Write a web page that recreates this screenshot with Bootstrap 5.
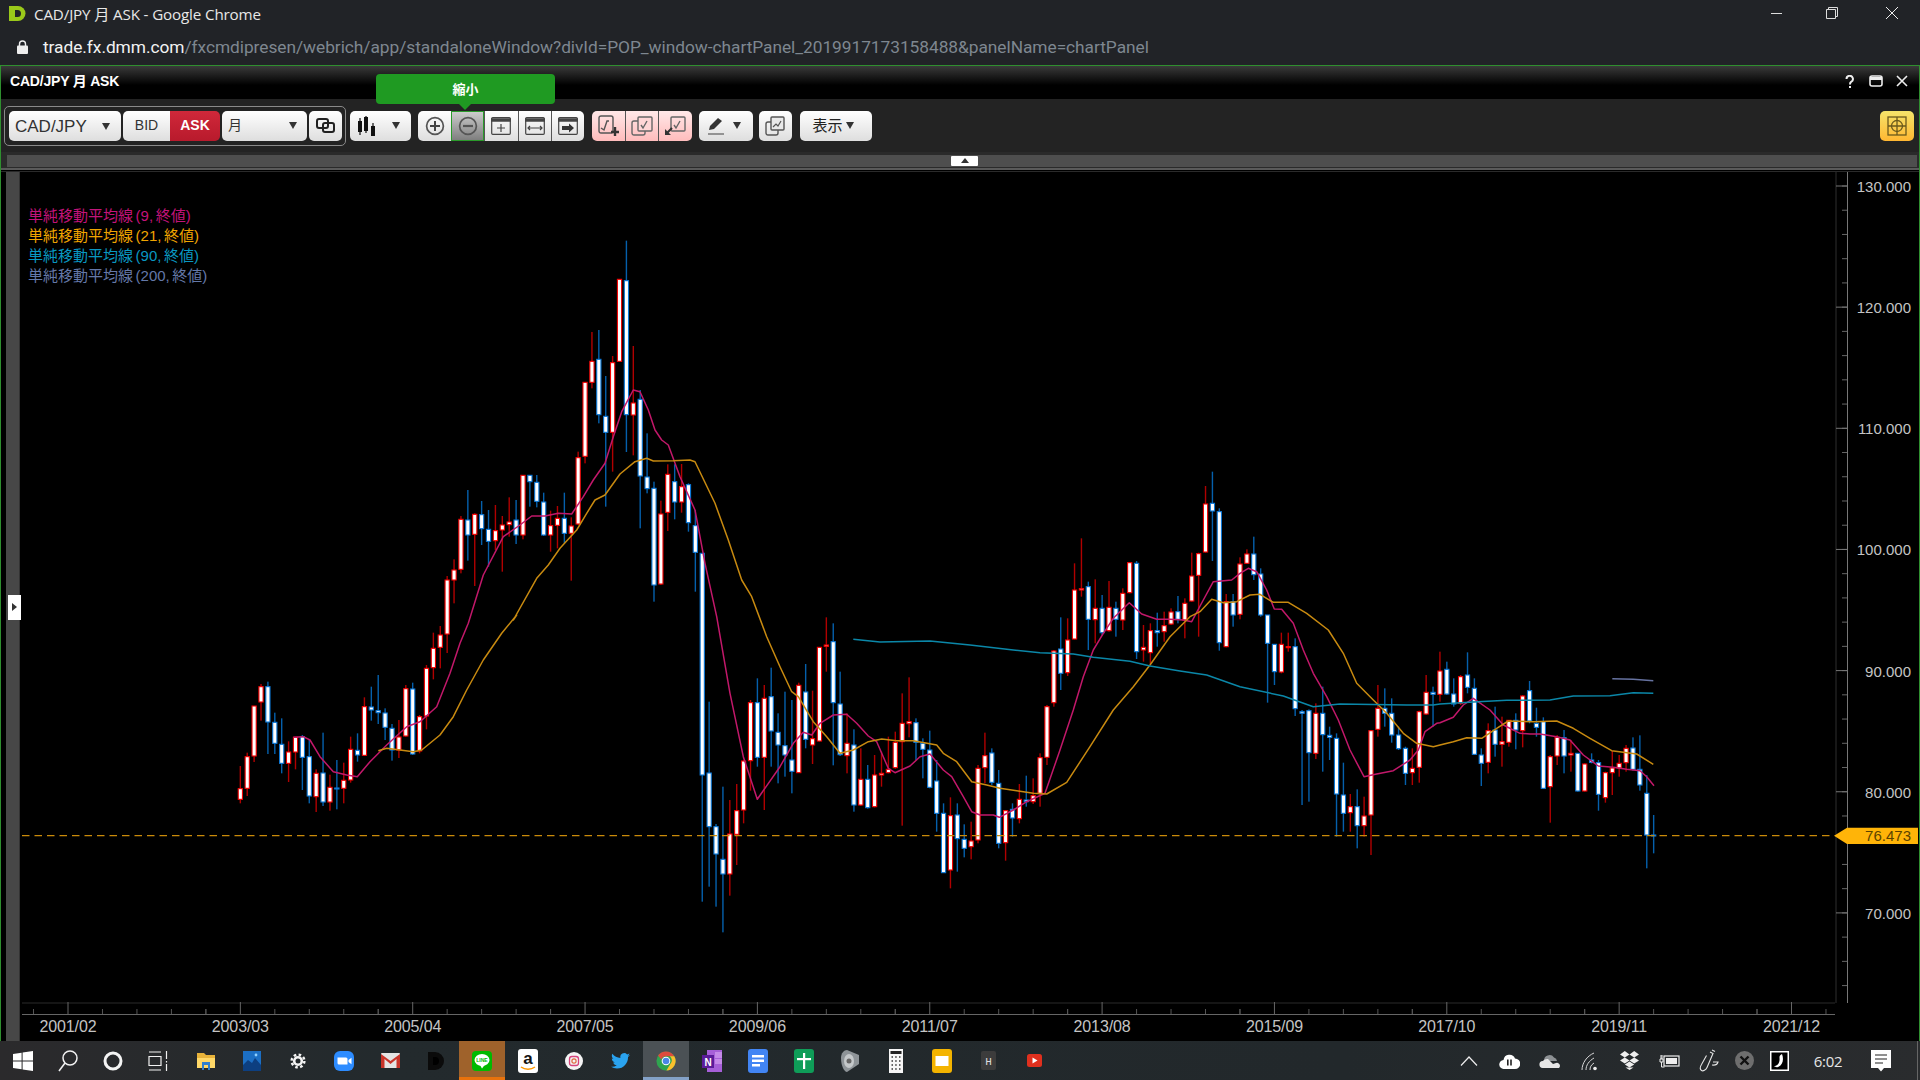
<!DOCTYPE html>
<html lang="ja">
<head>
  <meta charset="UTF-8" />
  <title>CAD/JPY 月 ASK</title>
  <link href="https://cdn.jsdelivr.net/npm/bootstrap@5.3.3/dist/css/bootstrap.min.css" rel="stylesheet" />
  <style>
    html, body { height: 100%; background: #000; overflow: hidden; }
    body { font-family: "Liberation Sans", "Noto Sans CJK JP", sans-serif; }
    svg { display: block; flex: none; }

    .gc-title { height: 30px; background: #212327; color: #e8e8e8; font: 15.2px "Open Sans", "Noto Sans CJK JP", sans-serif; padding-left: 9px; padding-bottom: 4px; }
    .gc-title .ttl { margin-left: 8px; letter-spacing: -.15px; }
    .gc-ctl { width: 56px; }
    .gc-addr { height: 35px; background: #212327; padding-left: 17px; padding-bottom: 2px; font: 17.33px Roboto, sans-serif; color: #7e8790; letter-spacing: -.05px; }
    .gc-addr b { font-weight: 400; color: #f2f2f2; }
    .gc-addr span { margin-left: 15px; }

    .dmm-win { border: solid #2f8f2f; border-width: 1px 1px 0; min-height: 0; }
    .win-head { height: 33px; background: linear-gradient(#3a3a3a, #000 58%); color: #fff; font-size: 14px; font-weight: 700; padding-left: 9px; padding-right: 4px; padding-bottom: 2px; letter-spacing: -.2px; }
    .win-head .hd-ico { width: 26px; }

    .win-tools { height: 53px; background: #232323; padding-top: 11.5px; padding-left: 8px; padding-right: 5px; position: relative; }
    .tool-frame { position: absolute; left: 3px; top: 7px; width: 342px; height: 40px; border: 1px solid #8a8a8a; border-radius: 5px; }
    .tb { height: 30.6px; padding: 0; border: 0; border-radius: 5px; background: linear-gradient(#fff, #dedede); color: #333; position: relative; }
    .tb:hover { background: linear-gradient(#fff, #dedede); color: #333; }
    .btn-group > .tb + .tb { margin-left: 0 !important; border-left: 1px solid #555; }
    .btn-group .tb:not(:first-child) { border-top-left-radius: 0; border-bottom-left-radius: 0; }
    .btn-group .tb:not(:last-child) { border-top-right-radius: 0; border-bottom-right-radius: 0; }
    .w-pair { width: 112px; margin-right: 2px; justify-content: space-between; font-size: 17px; padding: 2px 11px 0 6px; color: #333; }
    .w-bid { width: 47px; font-size: 14px; }
    .w-ask { width: 50px; font-size: 14px; font-weight: 700; }
    .tb.is-ask, .tb.is-ask:hover { background: linear-gradient(#d0283a, #b81a2c); color: #fff; border-left: 0 !important; }
    .w-tf { width: 85px; margin: 0 2px; justify-content: space-between; font-size: 14px; padding: 0 10px 0 6px; }
    .w-ic { width: 33px; }
    .w-chart { width: 61px; margin-left: 8px; margin-right: 7px; justify-content: space-between; padding: 0 11px 0 7px; }
    .w-seg { width: 33.2px; }
    .tb.is-on, .tb.is-on:hover { background: linear-gradient(#cfcfcf, #7c7c7c); box-shadow: inset 0 0 0 1px #2a9a2a; border-left: 0 !important; }
    .tb.is-pink, .tb.is-pink:hover { background: linear-gradient(#ffe8e8, #ffbcbc); }
    .w-pen { width: 54px; margin: 0 6px 0 7px; justify-content: space-between; padding: 0 12px 0 9px; }
    .w-show { width: 72px; margin-left: 8px; font-size: 15px; gap: 3px; color: #222; padding-right: 5px; }
    .tb.is-gold, .tb.is-gold:hover { width: 34px; background: linear-gradient(#f5e46a, #ffb732); }
    .zoom-gap { margin-right: 8px; }
    .caret { width: 0; height: 0; border: solid transparent; border-width: 7px 4.5px 0; border-top-color: #333; }

    .tip-green { position: absolute; left: 375px; top: -25px; width: 179px; height: 30px; padding-bottom: 2px; background: #1f9a22; color: #fff; border-radius: 4px; font: 700 13px "Noto Sans CJK JP", sans-serif; z-index: 5; }
    .tip-green::after { content: ""; position: absolute; left: 83px; top: 100%; border: solid transparent; border-width: 6px 6px 0; border-top-color: #1f9a22; }

    .split-bar { height: 20px; background: #2a2a2a; padding-top: 3px; position: relative; }
    .split-fill { height: 12px; margin: 0 2px 0 6px; background: #4e4e4e; border-bottom: 0; }
    .split-line { height: 3px; margin: 1px 0 0; border-top: 2px solid #5a5a5a; background: #000; }
    .split-grip { position: absolute; left: 950px; top: 4px; width: 27px; height: 10px; background: #fff; border-radius: 1px; }
    .split-grip::after { content: ""; position: absolute; left: 10px; top: 2px; border: solid transparent; border-width: 0 4px 5px; border-bottom-color: #333; }

    .chart-wrap { min-height: 0; background: #000; }
    .chart-rail { width: 20px; padding-left: 5px; position: relative; flex: none; }
    .chart-rail .fill { width: 14px; height: 100%; background: #474747; border-right: 1px solid #333; }
    .rail-grip { position: absolute; left: 7px; top: 423px; width: 13px; height: 25px; background: #fff; }
    .rail-grip::after { content: ""; position: absolute; left: 4px; top: 8px; border: solid transparent; border-width: 4px 0 4px 5px; border-left-color: #333; }
    .ma-legend { position: absolute; left: 7px; top: 34px; font: 15px/20.1px "Liberation Sans", "Noto Sans CJK JP", sans-serif; word-spacing: -1.6px; }
    .ma-a { color: #c2147a; } .ma-b { color: #f0a400; } .ma-c { color: #0997c2; } .ma-d { color: #6478a8; }
    .ax { font: 16px "Liberation Sans", sans-serif; fill: #c4c4c4; letter-spacing: -.1px; }
    .ay { font: 15px "Liberation Sans", sans-serif; fill: #c4c4c4; }
    .ap { font: 15px "Liberation Sans", sans-serif; fill: #5c4300; }

    .task-bar { height: 39px; background: linear-gradient(90deg, #2b2a2c, #232a2d 20%, #22282b 70%, #2a2c2e); color: #e6e6e6; }
    .t-slot { width: 46px; height: 39px; position: relative; }
    .t-slot.first { width: 45px; }
    .t-gap { width: 3px; }
    .t-line { background: #9f622b; box-shadow: inset 0 -3px 0 #e8720c; }
    .t-chr { background: #4b5155; box-shadow: inset 0 -3px 0 #84a2c8; }
    .t-tray { width: 40px; height: 39px; }
    .t-mini { width: 30px; }
    .t-clock { font: 15px "Open Sans", sans-serif; width: 56px; letter-spacing: -.3px; margin-left: 1px; margin-right: 5px; }
    .t-edge { width: 1px; height: 39px; background: #666; margin-left: 16px; margin-right: 2px; }
  </style>
</head>
<body class="d-flex flex-column m-0">

  <div class="gc-title d-flex align-items-center flex-none">
    <svg width="17" height="15" viewBox="0 0 17 15"><path d="M0 0h9a7.500 7.500 0 0 1 0 15H0z" fill="#9ac81a"/><path d="M6 4h2.500a3.500 3.500 0 0 1 0 7H6z" fill="#212327"/></svg>
    <div class="ttl flex-grow-1">CAD/JPY 月 ASK - Google Chrome</div>
    <div class="gc-ctl d-flex justify-content-center"><svg width="11" height="11"><path d="M0 5.5h11" stroke="#ddd"/></svg></div>
    <div class="gc-ctl d-flex justify-content-center"><svg width="12" height="12" fill="none" stroke="#ddd"><path d="M.5 2.5h9v9h-9zM2.5 2.5v-2h9v9h-2"/></svg></div>
    <div class="gc-ctl d-flex justify-content-center ms-1"><svg width="12" height="12" stroke="#eee"><path d="M0 0l12 12M12 0L0 12"/></svg></div>
  </div>
  <div class="gc-addr d-flex align-items-center">
    <svg width="11" height="14" viewBox="0 0 11 14"><path d="M2.5 6V4a3 3 0 0 1 6 0v2" fill="none" stroke="#eee" stroke-width="1.4"/><rect y="5.5" width="11" height="8.5" rx="1" fill="#eee"/></svg>
    <span><b>trade.fx.dmm.com</b>/fxcmdipresen/webrich/app/standaloneWindow?divId=POP_window-chartPanel_2019917173158488&amp;panelName=chartPanel</span>
  </div>

  <div class="dmm-win flex-grow-1 d-flex flex-column">
    <div class="win-head d-flex align-items-center justify-content-between">
      <div>CAD/JPY 月 ASK</div>
      <div class="d-flex">
        <div class="hd-ico d-flex justify-content-center"><svg width="10" height="14" viewBox="0 0 10 14" fill="none" stroke="#eee" stroke-width="2"><path d="M1.5 4a3.2 3.2 0 1 1 4.6 2.9C5 7.6 5 8.3 5 9.5"/><path d="M5 11v2"/></svg></div>
        <div class="hd-ico d-flex justify-content-center"><svg width="14" height="12" viewBox="0 0 14 12" fill="none" stroke="#eee" stroke-width="1.6"><rect x="1" y="1" width="12" height="10" rx="2"/><path d="M1 3.5h12" stroke-width="3"/></svg></div>
        <div class="hd-ico d-flex justify-content-center"><svg width="12" height="12" stroke="#eee" stroke-width="1.6"><path d="M1 1l10 10M11 1L1 11"/></svg></div>
      </div>
    </div>

    <div class="win-tools d-flex">
      <div class="tool-frame"></div>
      <div class="tip-green d-flex align-items-center justify-content-center">縮小</div>

      <button class="btn tb w-pair d-flex align-items-center">CAD/JPY<i class="caret"></i></button>
      <div class="btn-group">
        <button class="btn tb w-bid">BID</button>
        <button class="btn tb w-ask is-ask">ASK</button>
      </div>
      <button class="btn tb w-tf d-flex align-items-center">月<i class="caret"></i></button>
      <button class="btn tb w-ic d-flex align-items-center justify-content-center">
        <svg width="19" height="15" viewBox="0 0 19 15" fill="none" stroke="#222" stroke-width="2"><rect x="1" y="1" width="11" height="9" rx="2"/><rect x="7" y="5" width="11" height="9" rx="2"/></svg>
      </button>

      <button class="btn tb w-chart d-flex align-items-center">
        <svg width="19" height="20" viewBox="0 0 19 20" fill="#111"><rect x="1" y="5" width="4" height="11"/><rect x="2.4" y="2" width="1.2" height="17"/><rect x="7" y="1" width="4" height="14"/><rect x="8.4" y="0" width="1.2" height="17"/><rect x="14" y="10" width="4" height="10"/><rect x="15.4" y="7" width="1.2" height="13"/></svg>
        <i class="caret"></i>
      </button>

      <div class="btn-group zoom-gap">
        <button class="btn tb w-seg d-flex align-items-center justify-content-center">
          <svg width="20" height="20" viewBox="0 0 20 20" fill="none" stroke="#555" stroke-width="1.7"><circle cx="10" cy="10" r="8.4"/><path d="M10 5v10M5 10h10" stroke="#444" stroke-width="2"/></svg>
        </button>
        <button class="btn tb w-seg is-on d-flex align-items-center justify-content-center">
          <svg width="20" height="20" viewBox="0 0 20 20" fill="none" stroke="#555" stroke-width="1.7"><circle cx="10" cy="10" r="8.4"/><path d="M5 10h10" stroke-width="2.2"/></svg>
        </button>
        <button class="btn tb w-seg d-flex align-items-center justify-content-center">
          <svg width="20" height="18" viewBox="0 0 20 18" fill="none" stroke="#444" stroke-width="1.2"><rect x=".7" y=".7" width="18.6" height="16.6" rx="1"/><path d="M0 3h20" stroke-width="3.5"/><path d="M10 7v8M6 11h8"/></svg>
        </button>
        <button class="btn tb w-seg d-flex align-items-center justify-content-center">
          <svg width="20" height="18" viewBox="0 0 20 18" fill="none" stroke="#444" stroke-width="1.2"><rect x=".7" y=".7" width="18.6" height="16.6" rx="1"/><path d="M0 3h20" stroke-width="3.5"/><path d="M3 11h14M5 9l-2 2 2 2M15 9l2 2-2 2"/></svg>
        </button>
        <button class="btn tb w-seg d-flex align-items-center justify-content-center">
          <svg width="20" height="18" viewBox="0 0 20 18" fill="none" stroke="#444" stroke-width="1.2"><rect x=".7" y=".7" width="18.6" height="16.6" rx="1"/><path d="M0 3h20" stroke-width="3.5"/><path d="M4 9h7V6.5l5 4.5-5 4.5V13H4z" fill="#333" stroke="none"/></svg>
        </button>
      </div>

      <div class="btn-group">
        <button class="btn tb is-pink w-seg d-flex align-items-center justify-content-center">
          <svg width="22" height="22" viewBox="0 0 22 22" fill="none" stroke="#555" stroke-width="1.4"><rect x="1" y="1" width="14" height="17" rx="2"/><path d="M3 13l3 2 3-9 2 0"/><path d="M17 12v9M13 17h8" stroke="#333" stroke-width="2.4"/></svg>
        </button>
        <button class="btn tb is-pink w-seg d-flex align-items-center justify-content-center">
          <svg width="22" height="20" viewBox="0 0 22 20" fill="none" stroke="#666" stroke-width="1.4"><rect x="1" y="5" width="13" height="14" rx="2"/><rect x="7" y="1" width="14" height="14" rx="1" fill="#ffd6d6"/><path d="M10 9l2 3 4-7"/></svg>
        </button>
        <button class="btn tb is-pink w-seg d-flex align-items-center justify-content-center">
          <svg width="22" height="20" viewBox="0 0 22 20" fill="none" stroke="#666" stroke-width="1.4"><rect x="7" y="1" width="14" height="14" rx="1"/><path d="M10 9l2 3 4-7"/><path d="M1 13v6h6z" fill="#333" stroke="none"/><path d="M3 17l5-5" stroke="#333" stroke-width="2.2"/></svg>
        </button>
      </div>

      <button class="btn tb w-pen d-flex align-items-center">
        <svg width="17" height="19" viewBox="0 0 17 19"><path d="M1 14l1-4 8-8 4 3-8 8z" fill="#333"/><path d="M0 18h16" stroke="#666" stroke-width="1.3"/></svg>
        <i class="caret"></i>
      </button>
      <button class="btn tb w-ic d-flex align-items-center justify-content-center">
        <svg width="20" height="20" viewBox="0 0 20 20" fill="none" stroke="#555" stroke-width="1.4"><rect x="1" y="6" width="12" height="13" rx="2"/><rect x="6" y="1" width="13" height="13" rx="1" fill="#e9e9e9"/><path d="M8 11l3-3 2 2 3-5" stroke-width="1.2"/></svg>
      </button>
      <button class="btn tb w-show d-flex align-items-center justify-content-center">表示<i class="caret"></i></button>

      <div class="flex-grow-1"></div>
      <button class="btn tb is-gold d-flex align-items-center justify-content-center">
        <svg width="20" height="20" viewBox="0 0 20 20" fill="none" stroke="#6b5a1c" stroke-width="1.3"><rect x="1" y="1" width="18" height="18"/><circle cx="10" cy="10" r="5.5"/><path d="M10 1v18M1 10h18"/></svg>
      </button>
    </div>

    <div class="split-bar">
      <div class="split-fill"></div>
      <div class="split-line"></div>
      <div class="split-grip"></div>
    </div>

    <div class="chart-wrap flex-grow-1 d-flex position-relative">
      <div class="chart-rail">
        <div class="fill"></div>
        <div class="rail-grip"></div>
      </div>
      <div class="position-relative flex-grow-1">
        <svg id="chart" width="1897" height="869" viewBox="21 172 1897 869"></svg>
        <div class="ma-legend">
          <div class="ma-a">単純移動平均線 (9, 終値)</div>
          <div class="ma-b">単純移動平均線 (21, 終値)</div>
          <div class="ma-c">単純移動平均線 (90, 終値)</div>
          <div class="ma-d">単純移動平均線 (200, 終値)</div>
        </div>
      </div>
    </div>
  </div>

  <div class="task-bar d-flex align-items-center flex-none">
    <div class="t-slot first d-flex align-items-center justify-content-center">
      <svg width="20" height="20" viewBox="0 0 20 20" fill="#fff"><path d="M0 3l8.6-1.3v7.8H0zM9.6 1.5L20 0v9.5H9.6zM0 10.5h8.6v7.8L0 17zM9.6 10.5H20V20L9.6 18.5z"/></svg>
    </div>
    <div class="t-slot first d-flex align-items-center justify-content-center">
      <svg width="20" height="24" viewBox="0 0 20 24" fill="none" stroke="#f2f2f2" stroke-width="1.5"><circle cx="12" cy="9" r="7"/><path d="M7 14l-6 8"/></svg>
    </div>
    <div class="t-slot first d-flex align-items-center justify-content-center">
      <svg width="20" height="20" viewBox="0 0 20 20" fill="none" stroke="#f4f4f4" stroke-width="3"><circle cx="10" cy="10" r="8"/></svg>
    </div>
    <div class="t-slot first d-flex align-items-center justify-content-center">
      <svg width="20" height="20" viewBox="0 0 20 20" fill="none" stroke="#f2f2f2" stroke-width="1.2"><path d="M1 1h12M1 19h12M1 5.5h12v9H1zM18.5 0v8M18.5 10v1.5M18.5 13v7"/></svg>
    </div>
    <div class="t-gap"></div>

    <div class="t-slot d-flex align-items-center justify-content-center">
      <svg width="18" height="18" viewBox="0 0 18 18"><path d="M0 1h7l2 2h9v13H0z" fill="#e8b33a"/><path d="M0 6h18v10H0z" fill="#ffd868"/><path d="M5 10h8v8h-2v-5H7v5H5z" fill="#2f7fd0"/></svg>
    </div>
    <div class="t-slot d-flex align-items-center justify-content-center">
      <svg width="18" height="20" viewBox="0 0 18 20"><rect width="18" height="20" fill="#1c6fc4"/><path d="M0 20v-6l5-5 4 3 3-5 6 7v6z" fill="#0d3f80"/><circle cx="13" cy="4" r="1.4" fill="#8fd0ff"/></svg>
    </div>
    <div class="t-slot d-flex align-items-center justify-content-center">
      <svg width="16" height="16" viewBox="0 0 16 16" fill="none" stroke="#f4f4f4"><circle cx="8" cy="8" r="3.8" stroke-width="2.6"/><circle cx="8" cy="8" r="6.4" stroke-width="2.4" stroke-dasharray="2.6 2.4"/></svg>
    </div>
    <div class="t-slot d-flex align-items-center justify-content-center">
      <svg width="20" height="20" viewBox="0 0 20 20"><rect width="20" height="20" rx="6" fill="#2d8cff"/><path d="M3.5 6.5h8.5a1.5 1.5 0 0 1 1.5 1.5v5.500H5A1.500 1.500 0 0 1 3.500 12z" fill="#fff"/><path d="M14.500 9l3-2.300v6.600l-3-2.300z" fill="#fff"/></svg>
    </div>
    <div class="t-slot d-flex align-items-center justify-content-center">
      <svg width="19" height="15" viewBox="0 0 19 15"><rect width="19" height="15" rx="1" fill="#e4e4e4"/><path d="M0 15V1l9.500 7L19 1v14h-3.500V6L9.500 11 3.500 6v9z" fill="#c9342a"/></svg>
    </div>
    <div class="t-slot d-flex align-items-center justify-content-center">
      <svg width="17" height="18" viewBox="0 0 17 18"><path d="M0 0h7a9 9 0 0 1 0 18H0z" fill="#0b0b0b"/><path d="M5 5h2a4 4 0 0 1 0 8H5z" fill="#000"/></svg>
    </div>
    <div class="t-slot t-line d-flex align-items-center justify-content-center">
      <svg width="20" height="20" viewBox="0 0 20 20"><rect width="20" height="20" rx="4" fill="#00b900"/><ellipse cx="10" cy="9" rx="7.500" ry="6" fill="#fff"/><path d="M8 14l2 3.500 3-4z" fill="#fff"/><text x="10" y="11" text-anchor="middle" font-size="5" font-weight="700" fill="#00b900" font-family="Liberation Sans">LINE</text></svg>
    </div>
    <div class="t-slot d-flex align-items-center justify-content-center">
      <svg width="20" height="24" viewBox="0 0 20 24"><rect width="20" height="24" rx="3" fill="#fff"/><text x="10" y="15" text-anchor="middle" font-size="17" font-weight="700" fill="#111" font-family="Liberation Sans">a</text><path d="M3 18c4 3 10 3 14 0" fill="none" stroke="#f90" stroke-width="1.500"/></svg>
    </div>
    <div class="t-slot d-flex align-items-center justify-content-center">
      <svg width="18" height="18" viewBox="0 0 18 18"><circle cx="9" cy="9" r="9" fill="#f4f4f4"/><rect x="4.500" y="4.500" width="9" height="9" rx="2.500" fill="none" stroke="#d6437c" stroke-width="1.300"/><circle cx="9" cy="9" r="2.100" fill="none" stroke="#e06a40" stroke-width="1.200"/></svg>
    </div>
    <div class="t-slot d-flex align-items-center justify-content-center">
      <svg width="19" height="16" viewBox="0 0 24 20"><path d="M24 2.400c-.9.400-1.800.7-2.800.8 1-.6 1.800-1.600 2.200-2.700-1 .6-2 1-3.100 1.200A4.900 4.900 0 0 0 11.900 6.200C7.800 6 4.200 4 1.700.9c-1.300 2.200-.6 5.100 1.500 6.600-.8 0-1.600-.2-2.200-.6 0 2.300 1.600 4.400 3.900 4.900-.7.200-1.500.2-2.200.1.600 2 2.400 3.400 4.600 3.400A9.900 9.900 0 0 1 0 17.300 14 14 0 0 0 7.500 19.500c9.100 0 14.300-7.700 14-14.600 1-.7 1.800-1.500 2.500-2.500z" fill="#2aa3ef"/></svg>
    </div>
    <div class="t-slot t-chr d-flex align-items-center justify-content-center">
      <svg width="20" height="24" viewBox="0 0 24 24"><circle cx="12" cy="12" r="11.500" fill="#2fa44f"/><path d="M12 .5a11.500 11.500 0 0 1 10 5.700H12a6 6 0 0 0-5.700 4L2.500 5.500A11.500 11.500 0 0 1 12 .5z" fill="#dd4b3e"/><path d="M22 6.200a11.500 11.500 0 0 1-9.500 17.300l5-8.500A6 6 0 0 0 16.500 6.200z" fill="#fbc02d"/><circle cx="12" cy="12" r="5.200" fill="#fff"/><circle cx="12" cy="12" r="4" fill="#4a86e8"/></svg>
    </div>
    <div class="t-slot d-flex align-items-center justify-content-center">
      <svg width="20" height="22" viewBox="0 0 20 22"><rect x="5" y="0" width="15" height="22" fill="#a65fd8"/><path d="M13 2h7v6h-7zM13 9h7v5h-7z" fill="#c489e8"/><rect x="0" y="5" width="12" height="13" fill="#5b1c9a"/><text x="6" y="15.500" text-anchor="middle" font-size="10" font-weight="700" fill="#fff" font-family="Liberation Sans">N</text></svg>
    </div>
    <div class="t-slot d-flex align-items-center justify-content-center">
      <svg width="20" height="24" viewBox="0 0 20 24"><rect width="20" height="24" rx="3" fill="#4285f4"/><path d="M4 6h12v2.500H4zM4 10.500h12V13H4zM4 15h8v2.500H4z" fill="#fff"/></svg>
    </div>
    <div class="t-slot d-flex align-items-center justify-content-center">
      <svg width="20" height="24" viewBox="0 0 20 24"><rect width="20" height="24" rx="3" fill="#0f9d58"/><path d="M3 9h14v2.200H3z" fill="#fff"/><path d="M9 4h2.200v16H9z" fill="#fff"/></svg>
    </div>
    <div class="t-slot d-flex align-items-center justify-content-center">
      <svg width="18" height="22" viewBox="0 0 18 22"><path d="M0 8c0-5 3-8 6-8l12 5v9L6 22c-3 0-6-7-6-14z" fill="#8e9498"/><ellipse cx="8" cy="11" rx="5" ry="7" fill="#c4c8ca"/><circle cx="8" cy="11" r="2.500" fill="#666"/></svg>
    </div>
    <div class="t-slot d-flex align-items-center justify-content-center">
      <svg width="14" height="24" viewBox="0 0 14 24"><rect width="14" height="24" fill="#f6f6f6"/><rect x="1.500" y="2" width="11" height="3" fill="#222"/><path d="M2.500 8h1.500M6.200 8h1.500M10 8h1.500M2.500 12h1.500M6.200 12h1.500M10 12h1.500M2.500 16h1.500M6.200 16h1.500M10 16h1.500M2.500 20h1.500M6.200 20h1.500M10 20h1.500" stroke="#333" stroke-width="1.300"/></svg>
    </div>
    <div class="t-slot d-flex align-items-center justify-content-center">
      <svg width="20" height="24" viewBox="0 0 20 24"><rect width="20" height="24" rx="3" fill="#f4b400"/><rect x="3.500" y="7" width="13" height="10" fill="#fff"/></svg>
    </div>
    <div class="t-slot d-flex align-items-center justify-content-center">
      <svg width="15" height="19" viewBox="0 0 15 19"><rect width="15" height="19" rx="2" fill="#3c3c3c"/><text x="7.500" y="14" text-anchor="middle" font-size="11" fill="#ddd" font-family="Liberation Mono">H</text></svg>
    </div>
    <div class="t-slot d-flex align-items-center justify-content-center">
      <svg width="15" height="13" viewBox="0 0 15 13"><rect width="15" height="13" rx="2.500" fill="#e0301e"/><path d="M5.500 3.500l5 3-5 3z" fill="#fff"/></svg>
    </div>

    <div class="flex-grow-1"></div>

    <div class="t-tray d-flex align-items-center justify-content-center">
      <svg width="18" height="10" viewBox="0 0 18 10" fill="none" stroke="#eee" stroke-width="1.200"><path d="M1 9.500L9 1l8 8.500"/></svg>
    </div>
    <div class="t-tray d-flex align-items-center justify-content-center">
      <svg width="21" height="16" viewBox="0 0 21 16"><path d="M5 16a4.500 4.500 0 0 1-.5-9A6 6 0 0 1 16 5.500 5.200 5.200 0 0 1 16 16z" fill="#fff"/><path d="M8.800 6.500v6M12 6.500v6" stroke="#222" stroke-width="1.600"/></svg>
    </div>
    <div class="t-tray d-flex align-items-center justify-content-center">
      <svg width="21" height="15" viewBox="0 0 21 15"><path d="M5 8a5.500 5.500 0 0 1 10-3.500A4 4 0 0 1 18 8z" fill="#8d9194"/><path d="M4 15a3.500 3.500 0 0 1-.2-7 6 6 0 0 1 5.200-2l5 5 3-1a3 3 0 0 1 3 5z" fill="#e6e6e6"/></svg>
    </div>
    <div class="t-tray d-flex align-items-center justify-content-center">
      <svg width="16" height="20" viewBox="0 0 16 20" fill="none" stroke="#d8d8d8" stroke-width="1"><path d="M1 19c0-7 5-14 12-17M5 19c0-5 3-9 8-12M9 19c0-3 1-5 4-7"/><circle cx="14" cy="17.500" r="1.800" fill="#eee" stroke="none"/></svg>
    </div>
    <div class="t-tray d-flex align-items-center justify-content-center">
      <svg width="19" height="19" viewBox="0 0 19 19" fill="#eee"><path d="M4.800 0L0 3.500l4.800 3 4.700-3zM14.200 0L9.500 3.500l4.700 3 4.800-3zM0 9.500l4.800 3 4.700-3-4.700-3zM14.200 6.500l-4.700 3 4.700 3 4.800-3zM4.800 13.500l4.700 3 4.700-3-4.700-3z"/><path d="M9.500 19l-4-2.500h8z"/></svg>
    </div>
    <div class="t-tray d-flex align-items-center justify-content-center">
      <svg width="21" height="16" viewBox="0 0 21 16" fill="none" stroke="#eee"><rect x="5" y="3" width="15" height="10" stroke-width="1.200"/><rect x="7" y="5" width="11" height="6" fill="#eee" stroke="none"/><path d="M1 6h3v3H1zM2 2v4M3 2v4M2.500 9v5h3" stroke-width="1"/></svg>
    </div>
    <div class="t-tray d-flex align-items-center justify-content-center">
      <svg width="20" height="24" viewBox="0 0 20 24" fill="none" stroke="#e4e4e4" stroke-width="1.100"><path d="M11 3l3 1.500-6 14c-1 2.500-4 4-5.500 3S1 18 2.500 15.500l5-9M14 13h5c-.5 2-2.500 3.500-6 3"/><path d="M13 1l3 1.500"/></svg>
    </div>
    <div class="t-tray t-mini d-flex align-items-center justify-content-center">
      <svg width="19" height="19" viewBox="0 0 19 19"><circle cx="9.500" cy="9.500" r="9.500" fill="#6e6e6e"/><path d="M5.500 5.500l8 8M13.500 5.500l-8 8" stroke="#111" stroke-width="2.400"/></svg>
    </div>
    <div class="t-tray d-flex align-items-center justify-content-center">
      <svg width="19" height="20" viewBox="0 0 19 20"><rect width="19" height="20" fill="#fff"/><rect x="1.500" y="1.500" width="16" height="17" fill="#000"/><path d="M12 3c2 5 1 11-4 13-1.500.5-3 0-4-1 3.500 0 6-3 5.500-8C9.300 5 10 4 12 3z" fill="#fff"/></svg>
    </div>
    <div class="t-clock text-center">6:02</div>
    <div class="t-tray d-flex align-items-center justify-content-center">
      <svg width="20" height="22" viewBox="0 0 20 22"><path d="M0 0h20v18h-7l-3 3.500L7 18H0z" fill="#fff"/><path d="M4 5h12M4 9h12M4 13h8" stroke="#222" stroke-width="1.100"/></svg>
    </div>
    <div class="t-edge"></div>
  </div>

  <script>
    // candles read off the chart: type + bodyTop,bodyBottom,wickTop,wickBottom, in crop coordinates (y = y0 + v/3)
    const candleRows = [
      [600, 'r566,598,498,610 r470,565,458,588 r318,468,318,486 r260,306,252,362 b260,366,245,462 b367,430,338,462 b433,490,355,520 r456,490,424,546 r412,456,412,508 b410,472,405,570 b470,588,420,610 r520,590,508,636 b519,606,398,618 r562,606,524,632 b564,566,480,628 r541,565,488,610 r448,540,410,548 b451,465,400,485 r320,466,292,468 b321,330,260,362 b332,338,225,372 b339,382,325,420 b385,450,372,482 r411,450,360,474 r266,408,255,410 b267,462,248,465 r350,453,345,460 r205,348,195,388 r145,203,98,238 r105,142,78,205'],
      [220, 'r1080,1242,1068,1299 r1050,1080,1018,1150 r898,1048,888,1060 b900,945,810,1022 r883,943,880,1098 b884,926,843,975 b928,964,870,1040 r932,962,855,990 r915,930,888,1055 r906,914,832,950 b900,945,840,972 r766,945,766,958 b766,785,766,860 b787,844,765,862 b846,945,818,948 r917,945,872,995 r895,916,858,985 b895,940,818,970 r918,940,892,1082 r713,912,695,915 r487,709,487,730 r424,487,336,505 b418,584,330,610 b589,637,468,860 r428,637,408,755 r178,424,178,424 b182,584,62,696 r549,585,378,706 b538,768,510,925 b771,806,640,820 b805,1095,785,1145 r882,1092,842,1095 r763,877,733,933 b785,846,733,898 r800,846,732,878 b794,908,790,935 b917,997,870,1115 b1000,1665,1000,2045'],
      [600, 'b519,680,305,860 b680,762,672,920 b778,822,560,997 r702,822,600,887 r632,703,552,795'],
      [580, 'r543,690,540,730 r368,542,360,632 b368,532,295,560 r355,532,315,690 b350,453,263,560 b457,495,400,610 b497,525,335,590 b540,574,360,640 r316,578,308,578 b336,478,252,505 r476,495,332,552 r202,483,202,485 r195,199,112,275 b185,368,130,556 b372,524,275,528 r490,527,400,580 b495,675,448,695 r598,675,505,678 b598,683,555,686 r585,680,525,682 r580,585,515,620 r568,578,470,580 r487,563,455,566 r430,485,340,737 r425,431,292,472 b428,487,415,540 b490,508,475,595 b510,622,452,625 b603,700,540,755 b700,878,670,878 r707,870,652,925 b705,776,670,875 b778,805,733,832 r783,800,725,838 r565,780,555,790 r527,563,458,610 b519,607,505,615 b610,790,570,805 r692,788,690,842 b688,714,670,770 r658,716,612,730 b660,665,587,680 r647,665,595,672'],
      [460, 'r893,1000,880,1040 r740,892,735,915 r573,728,570,740 b567,640,472,690 r540,638,475,648 r390,537,310,538 r386,390,235,410 b380,478,365,570 r445,479,358,550 b445,518,405,525 r442,512,363,515 b445,478,425,530 r400,480,385,510 r308,398,308,400 b310,575,303,597 r562,570,495,605 r512,578,490,612 b512,518,458,560 r497,515,455,545 r456,492,445,495 b455,478,408,490 r430,480,415,535 r348,423,278,425 r281,346,278,530 r132,276,78,278 b130,153,35,303 b155,548,145,572 r425,560,402,562 b425,465,402,500 r312,463,292,478 r282,310,268,312 b282,344,230,360 b342,465,325,470 b465,550,465,728 b553,635,553,675 r553,636,518,640 r560,562,518,575 b560,746,535,768 b755,760,750,1035 b752,878,748,1025 r760,880,730,897 b760,824,680,935 b826,832,800,900 b835,1002,820,1130 b1005,1060,908,1115 r1040,1058,1002,1115 b1040,1097,988,1165 r1068,1097,1010,1130 r812,1065,810,1185 r745,808,675,830 b745,760,685,800 b760,825,715,848 b825,866,800,870 b865,940,860,975 r925,938,865,975 r755,922,752,968 r697,762,645,765 b697,703,680,800 r633,703,575,725 b628,702,605,705'],
      [640, 'b162,192,115,200 r110,190,105,195 b105,142,37,160 b145,343,115,345 b345,370,325,438 r272,367,250,400 b270,313,200,350 r305,313,230,380 r241,307,240,320 b241,270,220,328 r168,272,165,322 b152,243,123,250 b250,262,203,290 b245,445,232,447 r350,440,345,548 r292,348,285,375 b293,348,270,400 r340,345,300,395 b340,453,340,455 r372,453,370,455 b360,367,340,370 b368,463,360,512 r398,473,395,488 r384,398,333,465 r370,384,345,410 r325,368,315,395 b324,388,292,392 b388,435,286,452 b460,585,405,685 b585,587,525,640']
    ];

    // moving averages, same crop coordinates: [x0, y0, 'x,y ...']
    const maLines = {
      '#c2186a': [
        [220, 600, '220,412 250,410 270,420 300,470 340,515 380,525 412,530 450,485 500,435 560,380 600,365 650,320 690,220 720,130 745,70'],
        [220, 220, '790,1065 850,950 900,915 935,888 975,888 1015,880 1055,882 1090,830 1120,780 1155,730 1180,650 1205,575 1240,510 1260,515 1285,570 1305,630 1325,660 1345,675 1380,770 1425,870 1455,1030'],
        [680, 580, '110,110 150,340 190,530 232,658 300,560 340,490 370,457 395,465 420,430 460,405 500,403 530,430 565,468 590,485 625,565 645,578 690,558 720,530 750,522 790,570 815,590 850,650 875,695 900,705 940,705 958,712 1000,690 1040,665 1095,640'],
        [1040, 460, '60,870 100,750 130,650 160,570 190,520 220,475 268,428 305,462 350,478 390,478 430,480 455,485 490,420 520,365 575,360 600,340 625,325 650,335 680,390 703,447 725,448 760,490 790,570 820,640 860,710 895,780 930,870 972,950 1010,942 1060,932 1110,900 1135,870 1155,815 1190,790'],
        [1440, 640, '0,248 40,232 70,195 100,175 150,210 190,255 240,280 270,282 300,282 350,290 390,300 430,345 475,378 520,382 560,388 600,392 620,410 642,437']
      ],
      '#c88a10': [
        [220, 600, '475,452 500,445 540,450 580,455 605,450 660,405 700,350 740,270 790,180 845,100 890,45'],
        [220, 220, '880,1200 950,1075 985,1035 1020,985 1070,930 1100,880 1125,840 1155,825 1200,762 1245,725 1280,715 1300,723 1360,722 1410,720 1425,725 1485,850 1525,960'],
        [680, 580, '185,0 215,50 260,170 300,260 335,335 355,350 400,425 440,470 480,520 520,510 565,485 605,477 650,482 700,482 770,495 790,520 830,545 875,605 920,615 960,625 1010,632 1060,640 1100,642 1160,607 1230,500 1300,390 1360,320 1410,255 1470,170 1530,110'],
        [1040, 460, '480,455 515,418 550,428 590,425 630,405 660,403 700,427 745,427 800,460 865,510 910,580 950,670 1000,720 1040,760 1090,820 1130,850 1180,860'],
        [1440, 640, '0,315 40,305 80,293 125,295 170,265 205,243 280,245 350,243 400,265 450,295 515,332 590,342 640,373']
      ],
      '#0b87a8': [
        [680, 580, '520,178 600,186 750,183 870,195 1000,210'],
        [1040, 460, '0,578 100,582 160,592 270,604 330,618 420,633 500,645 600,680 730,708 820,740 900,732 1100,735 1180,735'],
        [1440, 640, '0,192 100,186 200,181 330,180 400,168 510,167 580,158 640,160']
      ],
      '#6672a0': [
        [1440, 640, '517,116 580,118 640,122']
      ]
    };

    const chart = document.getElementById('chart');
    let out = '';

    // axes
    for (let y = 186; y < 1005; y += 24.23) {
      out += `<path d="M1842 ${y}H1847" stroke="#666"/>`;
    }
    out += '<path d="M1836 172V1003" stroke="#2e2e2e"/><path d="M1847.500 172V1003" stroke="#777"/>';
    [130, 120, 110, 100, 90, 80, 70].forEach((v, n) => {
      const y = 186 + n * 121.15;
      out += `<path d="M1836 ${y}H1847" stroke="#777"/>`;
      out += `<text class="ay" x="1911" y="${y + 6}" text-anchor="end">${v}.000</text>`;
    });
    out += '<path d="M22 1003H1835" stroke="#2a2a2a"/><path d="M22 1014.500H1835" stroke="#666"/>';
    ['2001/02', '2003/03', '2005/04', '2007/05', '2009/06', '2011/07', '2013/08', '2015/09', '2017/10', '2019/11', '2021/12'].forEach((t, n) => {
      const x = 68 + n * 172.35;
      out += `<path d="M${x} 1002V1014" stroke="#666"/>`;
      for (let m = -1; m < 4; m++) {
        const mx = x + (m < 0 ? -34.5 : (m + 1) * 34.47);
        if (mx < 1835) out += `<path d="M${mx} 1009V1014" stroke="#555"/>`;
      }
      out += `<text class="ax" x="${x}" y="1032" text-anchor="middle">${t}</text>`;
    });

    // candles
    let i = 0;
    candleRows.forEach(([y0, row]) => {
      row.split(' ').forEach(c => {
        const up = c[0] === 'r';
        const [t, b, wt, wb] = c.slice(1).split(',').map(v => y0 + v / 3);
        const x = 240.33 + i * 6.8943;
        out += `<rect x="${x - .7}" y="${wt}" width="1.4" height="${wb - wt}" fill="${up ? '#b00000' : '#0560ac'}"/>`;
        out += `<rect x="${x - 2.1}" y="${t}" width="4.2" height="${Math.max(b - t, 1)}" fill="#fff" stroke="${up ? '#f40000' : '#0b78d8'}" stroke-width="1.100"/>`;
        i++;
      });
    });

    // price line
    out += '<path d="M22 835.700H1834" stroke="#c98a0a" stroke-width="1.300" stroke-dasharray="7.500 5"/>';

    // moving averages
    Object.keys(maLines).forEach(color => {
      const pts = [];
      maLines[color].forEach(([x0, y0, s]) => {
        s.split(' ').forEach(p => {
          const [a, b] = p.split(',').map(Number);
          pts.push((x0 + a / 3).toFixed(1) + ',' + (y0 + b / 3).toFixed(1));
        });
      });
      out += `<polyline points="${pts.join(' ')}" fill="none" stroke="${color}" stroke-width="1.500" stroke-linejoin="round"/>`;
    });

    // current price tag
    out += '<polygon points="1834,835.700 1847,827.700 1918,827.700 1918,844 1847,844" fill="#ffb408"/>';
    out += '<text class="ap" x="1911" y="841" text-anchor="end">76.473</text>';

    chart.innerHTML = out;
  </script>
  <script src="https://cdn.jsdelivr.net/npm/bootstrap@5.3.3/dist/js/bootstrap.bundle.min.js"></script>
</body>
</html>
